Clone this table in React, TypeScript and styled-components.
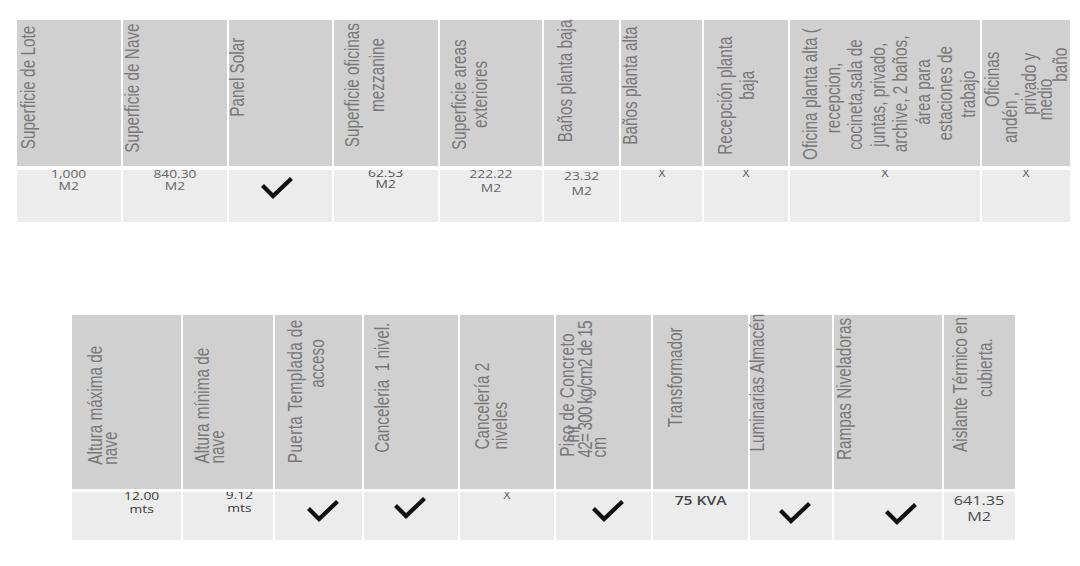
import styled, { createGlobalStyle } from "styled-components";

// rotated header text: Liberation Sans squeezed along the line (looks like the stretched screenshot)
const LH = 18;
const CAP = 2.4;
const SQ = 0.785;

type Line = { t: string; x: number; b: number; ls?: number };
type Head = { lines: Line[]; sq?: number };
type Value =
    | { kind: "text"; rows: string[]; size: number; lh: number; dy: number; dx?: number; color: string; bold?: boolean }
    | { kind: "check"; dy: number; dx?: number };

const topWidths = [104, 104, 103, 104, 102, 75, 81, 84, 190, 88];
const bottomWidths = [109, 90, 87, 94, 94, 95, 95, 82, 108, 71];

const topHeads: Head[] = [
    { lines: [{ t: "Superficie de Lote", x: 4, b: 17 }] },
    { lines: [{ t: "Superficie de Nave", x: 2, b: 13 }] },
    { lines: [{ t: "Panel Solar", x: 1, b: 49 }] },
    { lines: [{ t: "Superficie oficinas", x: 11, b: 19 }, { t: "mezzanine", x: 36, b: 54 }] },
    { lines: [{ t: "Superficie areas", x: 12, b: 16 }, { t: "exteriores", x: 33, b: 38 }] },
    { lines: [{ t: "Baños planta baja", x: 14, b: 24 }] },
    { lines: [{ t: "Baños planta alta", x: 2, b: 21 }] },
    { lines: [{ t: "Recepción planta", x: 14, b: 11 }, { t: "baja", x: 36, b: 66 }] },
    {
        lines: [
            { t: "Oficina planta alta (", x: 13, b: 6 },
            { t: "recepcion,", x: 35.5, b: 33 },
            { t: "cocineta,sala de", x: 58, b: 16 },
            { t: "juntas, privado,", x: 80.5, b: 19 },
            { t: "archive, 2 baños,", x: 103, b: 14 },
            { t: "área para", x: 125.5, b: 41 },
            { t: "estaciones de", x: 148, b: 26 },
            { t: "trabajo", x: 170.5, b: 48 },
        ],
    },
    {
        lines: [
            { t: "Oficinas", x: 3, b: 59 },
            { t: "andén ,", x: 21, b: 23 },
            { t: "privado y", x: 40, b: 51 },
            { t: "medio", x: 56, b: 46 },
            { t: "baño", x: 71, b: 84 },
        ],
    },
];

const bottomHeads: Head[] = [
    { lines: [{ t: "Altura máxima de", x: 16, b: 24 }, { t: "nave", x: 31, b: 24 }] },
    { lines: [{ t: "Altura mínima de", x: 12, b: 26 }, { t: "nave", x: 27, b: 26 }] },
    { lines: [{ t: "Puerta Templada de", x: 13, b: 26, ls: 0.5 }, { t: "acceso", x: 35, b: 101 }] },
    { lines: [{ t: "Canceleria  1 nivel.", x: 11, b: 36 }] },
    { lines: [{ t: "Cancelería 2", x: 15, b: 39 }, { t: "niveles", x: 33, b: 39 }] },
    {
        lines: [
            { t: "Piso de Concreto", x: 4, b: 32, ls: 0.5 },
            { t: "mr", x: 9, b: 46 },
            { t: "42= 300 kg/cm2 de 15", x: 22, b: 31, ls: -1 },
            { t: "cm", x: 35.5, b: 31 },
        ],
    },
    { lines: [{ t: "Transformador", x: 15, b: 62 }] },
    { lines: [{ t: "Luminarias Almacén", x: 0, b: 37 }] },
    { lines: [{ t: "Rampas Niveladoras", x: 3, b: 29 }] },
    { lines: [{ t: "Aislante Térmico en", x: 9, b: 37 }, { t: "cubierta.", x: 34, b: 92 }] },
];

const grey = "#666";
const dark = "#3a3a3a";

const topValues: Value[] = [
    { kind: "text", rows: ["1,000", "M2"], size: 11.5, lh: 12, dy: -2, color: grey },
    { kind: "text", rows: ["840.30", "M2"], size: 11.5, lh: 12, dy: -2, color: grey },
    { kind: "check", dy: 7, dx: -4 },
    { kind: "text", rows: ["62.53", "M2"], size: 11.5, lh: 11.5, dy: -3.5, color: "#555" },
    { kind: "text", rows: ["222.22", "M2"], size: 11.5, lh: 13.5, dy: -3, color: grey },
    { kind: "text", rows: ["23.32", "M2"], size: 11.5, lh: 15, dy: -2, color: grey },
    { kind: "text", rows: ["X"], size: 10, lh: 10, dy: -2, color: "#555" },
    { kind: "text", rows: ["X"], size: 10, lh: 10, dy: -2, color: "#555" },
    { kind: "text", rows: ["X"], size: 10, lh: 10, dy: -2, color: "#555" },
    { kind: "text", rows: ["X"], size: 10, lh: 10, dy: -2, color: "#555" },
];

const bottomValues: Value[] = [
    { kind: "text", rows: ["12.00", "mts"], size: 11.5, lh: 13, dy: -3, dx: 15, color: dark },
    { kind: "text", rows: ["9.12", "mts"], size: 11.5, lh: 13, dy: -4, dx: 11, color: dark },
    { kind: "check", dy: 8, dx: 4 },
    { kind: "check", dy: 5, dx: -1 },
    { kind: "text", rows: ["X"], size: 10, lh: 10, dy: -2.5, color: "#555" },
    { kind: "check", dy: 8, dx: 4 },
    { kind: "text", rows: ["75 KVA"], size: 13, lh: 16, dy: 0, color: "#444", bold: true },
    { kind: "check", dy: 10, dx: 4 },
    { kind: "check", dy: 11, dx: 13 },
    { kind: "text", rows: ["641.35", "M2"], size: 13.5, lh: 16.7, dy: -0.5, color: "#4a4a4a" },
];

export default function App() {
    return (
        <>
            <GlobalStyle />
            <Page>
                <Sheet $cols={topWidths} $head={146} $body={52} $gap={4} $x={17}>
                    {topHeads.map((h, i) => <HeaderCell key={"h" + i} head={h} />)}
                    {topValues.map((v, i) => <ValueCell key={"v" + i} value={v} />)}
                </Sheet>
                <Sheet $cols={bottomWidths} $head={174} $body={48} $gap={3} $x={72}>
                    {bottomHeads.map((h, i) => <HeaderCell key={"h" + i} head={h} />)}
                    {bottomValues.map((v, i) => <ValueCell key={"v" + i} value={v} />)}
                </Sheet>
            </Page>
        </>
    );
}

function HeaderCell({ head }: { head: Head }) {
    const sq = head.sq ?? SQ;
    const pb = Math.min(...head.lines.map((l) => l.b));
    return (
        <HeadCell $pb={pb}>
            <HeadText $sq={sq} $ml={head.lines[0].x - CAP}>
                {head.lines.map((l, i) => (
                    <HeadLine
                        key={i}
                        $gap={i === 0 ? 0 : l.x - head.lines[i - 1].x - LH}
                        $o={(l.b - pb) / sq}
                        $ls={l.ls ?? 0}
                    >
                        {l.t}
                    </HeadLine>
                ))}
            </HeadText>
        </HeadCell>
    );
}

function ValueCell({ value }: { value: Value }) {
    const dx = value.dx ?? 0;
    return (
        <BodyCell $dx={dx}>
            {value.kind === "check" ? (
                <Check $dy={value.dy} width="32" height="22" viewBox="0 0 32 22">
                    <path d="M1.5 8.5 L12 19 L30.5 1.5" fill="none" stroke="#111" strokeWidth="4.2" strokeLinejoin="miter" />
                </Check>
            ) : (
                <ValueText
                    $size={value.size}
                    $lh={value.lh}
                    $dy={value.dy}
                    $color={value.color}
                    $bold={!!value.bold}
                >
                    {value.rows.map((r, i) => <div key={i}>{r}</div>)}
                </ValueText>
            )}
        </BodyCell>
    );
}

const GlobalStyle = createGlobalStyle`
    html, body {
        margin: 0;
        background: #fff;
    }
`;

const Page = styled.div`
    display: flex;
    flex-direction: column;
    gap: 93px;
    padding-top: 20px;
    width: 1080px;
    height: 566px;
    box-sizing: border-box;
    overflow: hidden;
`;

const Sheet = styled.div<{ $cols: number[]; $head: number; $body: number; $gap: number; $x: number }>`
    display: grid;
    grid-template-columns: ${(p) => p.$cols.map((w) => w + "px").join(" ")};
    grid-template-rows: ${(p) => p.$head}px ${(p) => p.$body}px;
    column-gap: 2px;
    row-gap: ${(p) => p.$gap}px;
    margin-left: ${(p) => p.$x}px;
    width: max-content;
`;

const HeadCell = styled.div<{ $pb: number }>`
    background: #d0d0d0;
    display: flex;
    align-items: flex-end;
    padding-bottom: ${(p) => p.$pb}px;
    min-width: 0;
`;

const HeadText = styled.div<{ $sq: number; $ml: number }>`
    writing-mode: vertical-rl;
    flex-shrink: 0;
    margin-left: ${(p) => p.$ml}px;
    transform: translateY(${(p) => ((1 - p.$sq) / 2) * 100}%) rotate(180deg) scaleY(${(p) => p.$sq});
    font-family: "Liberation Sans", Arial, sans-serif;
    font-size: 19.5px;
    line-height: ${LH}px;
    color: #787878;
    white-space: pre;
`;

const HeadLine = styled.span<{ $gap: number; $o: number; $ls: number }>`
    display: block;
    margin-block-start: ${(p) => p.$gap}px;
    padding-inline-start: ${(p) => p.$o}px;
    letter-spacing: ${(p) => p.$ls}px;
`;

const BodyCell = styled.div<{ $dx: number }>`
    background: #ececec;
    display: flex;
    justify-content: center;
    align-items: flex-start;
    overflow: hidden;
    min-width: 0;
    padding-left: ${(p) => Math.max(0, p.$dx * 2)}px;
    padding-right: ${(p) => Math.max(0, -p.$dx * 2)}px;
`;

const ValueText = styled.div<{ $size: number; $lh: number; $dy: number; $color: string; $bold: boolean }>`
    margin-top: ${(p) => p.$dy}px;
    font-family: "Open Sans", "Liberation Sans", sans-serif;
    font-size: ${(p) => p.$size}px;
    line-height: ${(p) => p.$lh}px;
    font-weight: ${(p) => (p.$bold ? 600 : 400)};
    color: ${(p) => p.$color};
    text-align: center;
    white-space: nowrap;
    transform: scaleX(1.2);
`;

const Check = styled.svg<{ $dy: number }>`
    display: block;
    margin-top: ${(p) => p.$dy}px;
    flex-shrink: 0;
`;
